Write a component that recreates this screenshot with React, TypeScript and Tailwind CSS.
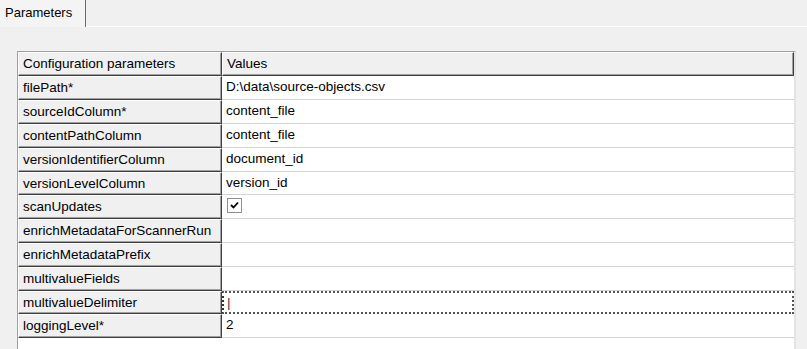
import React from "react"

const rows: { name: string; value: string; kind?: "check" | "focus" }[] = [
  { name: "filePath*", value: "D:\\data\\source-objects.csv" },
  { name: "sourceIdColumn*", value: "content_file" },
  { name: "contentPathColumn", value: "content_file" },
  { name: "versionIdentifierColumn", value: "document_id" },
  { name: "versionLevelColumn", value: "version_id" },
  { name: "scanUpdates", value: "", kind: "check" },
  { name: "enrichMetadataForScannerRun", value: "" },
  { name: "enrichMetadataPrefix", value: "" },
  { name: "multivalueFields", value: "" },
  { name: "multivalueDelimiter", value: "|", kind: "focus" },
  { name: "loggingLevel*", value: "2" },
]

// raised 3d cell like a win32 grid header
const raised =
  "bg-[#f0f0f0] border-t border-l border-t-white border-l-white border-b border-r border-b-[#404040] border-r-[#404040] shadow-[inset_-1px_-1px_0_#a0a0a0]"

function Check() {
  return (
    <div className="w-[15px] h-[15px] border border-[#8e8f8f] bg-white flex items-center justify-center">
      <svg width="11" height="11" viewBox="0 0 11 11">
        <path d="M2 5 L4.5 7.5 L9 2.5" fill="none" stroke="#000" strokeWidth="1.8" />
      </svg>
    </div>
  )
}

export default function App() {
  return (
    <div className="w-[807px] h-[349px] bg-[#f0f0f0] overflow-hidden font-['Liberation_Sans',sans-serif] text-[13.5px] text-black">
      {/* Tab strip */}
      <div className="flex h-[27px] border-b border-white">
        <div className="h-[27px] w-[86px] bg-[#f4f4f4] border-r border-[#6b6b6b] pl-[5px] pt-[5px] leading-[16px] text-[13px]">
          Parameters
        </div>
      </div>

      {/* Panel */}
      <div className="pt-[24px] pl-[17px]">
        <div className="w-[779px] h-[300px] bg-white border-l border-t border-[#a0a0a0] border-r-2 border-r-[#e4e4e4]">
          <div className="flex h-[24px]">
            <div className={`${raised} w-[204px] pl-[4px] leading-[22px]`}>Configuration parameters</div>
            <div className={`${raised} flex-1 pl-[4px] leading-[22px]`}>Values</div>
          </div>
          {rows.map((r, i) => (
            <div key={r.name} className={`flex ${i === 4 || i === 9 ? "h-[23px]" : "h-[24px]"}`}>
              <div className={`${raised} w-[204px] pl-[4px] leading-[21px]`}>{r.name}</div>
              {r.kind === "focus" ? (
                <div className="flex-1 border-2 border-dotted border-[#555] border-l-[#333] pl-[3px] leading-[19px] text-[#333]">
                  {r.value}
                </div>
              ) : r.kind === "check" ? (
                <div className="flex-1 border-b border-[#d4d4d4] pl-[5px] pt-[3px]">
                  <Check />
                </div>
              ) : (
                <div className="flex-1 border-b border-[#d4d4d4] pl-[4px] leading-[22px]">{r.value}</div>
              )}
            </div>
          ))}
        </div>
      </div>
    </div>
  )
}
